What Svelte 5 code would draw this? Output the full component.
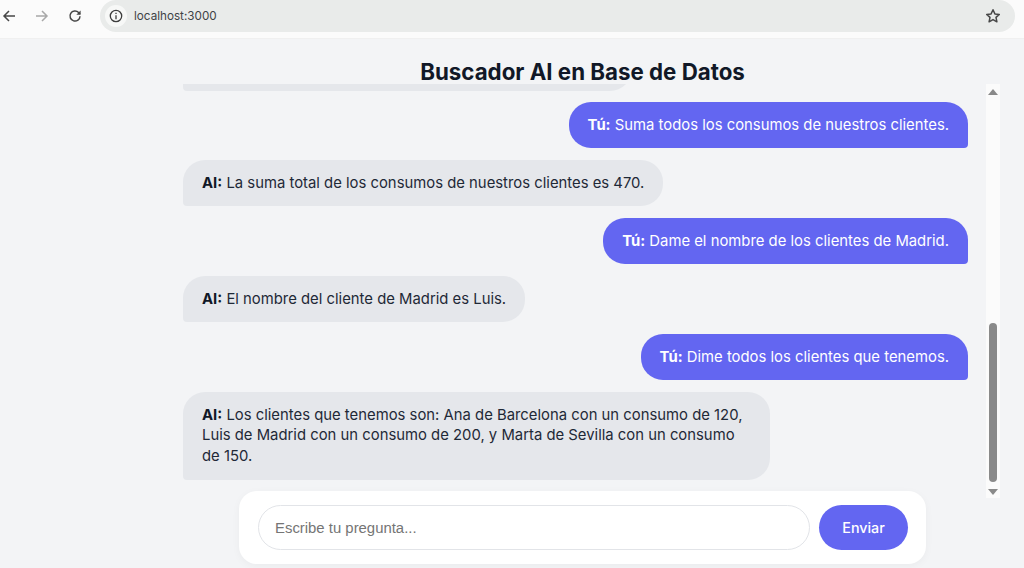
<script>
  const messages = [
    { from: 'user', text: 'Suma todos los consumos de nuestros clientes.' },
    { from: 'ai', text: 'La suma total de los consumos de nuestros clientes es 470.' },
    { from: 'user', text: 'Dame el nombre de los clientes de Madrid.' },
    { from: 'ai', text: 'El nombre del cliente de Madrid es Luis.' },
    { from: 'user', text: 'Dime todos los clientes que tenemos.' },
    {
      from: 'ai',
      text: 'Los clientes que tenemos son: Ana de Barcelona con un consumo de 120, Luis de Madrid con un consumo de 200, y Marta de Sevilla con un consumo de 150.'
    }
  ];

  let question = $state('');
</script>

<div class="toolbar">
  <button class="nav" aria-label="Atrás">
    <svg width="16" height="16" viewBox="0 0 16 16"><path d="M14 8H3M8 3L3 8l5 5" /></svg>
  </button>
  <button class="nav disabled" aria-label="Adelante">
    <svg width="16" height="16" viewBox="0 0 16 16"><path d="M2 8h11M8 3l5 5-5 5" /></svg>
  </button>
  <button class="nav" aria-label="Recargar">
    <svg width="16" height="16" viewBox="0 0 16 16">
      <path d="M13 8.2A5 5 0 1 1 11.6 4.6L13 6" />
      <path class="fill" d="M13.6 2.4v4.3H9.3z" />
    </svg>
  </button>
  <div class="omnibox">
    <span class="site-info">
      <svg width="14" height="14" viewBox="0 0 14 14">
        <circle cx="7" cy="7" r="5.7" />
        <path d="M7 6.2v4M7 3.8v1.3" />
      </svg>
    </span>
    <span class="url">localhost:3000</span>
    <svg class="star" width="16" height="16" viewBox="0 0 16 16">
      <path d="M8 1.8l1.9 4.1 4.4.5-3.3 3 .9 4.4L8 11.6l-3.9 2.2.9-4.4-3.3-3 4.4-.5z" />
    </svg>
  </div>
</div>

<main class="page">
  <h1>Buscador AI en Base de Datos</h1>

  <div class="chat-row">
    <div class="messages">
      <!-- older answer, scrolled almost out of view -->
      <div class="bubble ai older"></div>
      {#each messages as msg}
        <div class="bubble {msg.from}">
          <strong>{msg.from === 'user' ? 'Tú:' : 'AI:'}</strong>
          {msg.text}
        </div>
      {/each}
    </div>
    <div class="scrollbar">
      <span class="arrow up"></span>
      <div class="track"><div class="thumb"></div></div>
      <span class="arrow down"></span>
    </div>
  </div>

  <form class="ask" onsubmit={(e) => e.preventDefault()}>
    <input type="text" placeholder="Escribe tu pregunta..." bind:value={question} />
    <button type="submit">Enviar</button>
  </form>
</main>

<style>
  :global(body) {
    margin: 0;
    background: #f3f4f6;
    font-family: Inter, 'Liberation Sans', sans-serif;
    color: #111827;
    overflow: hidden;
  }

  .toolbar {
    display: flex;
    align-items: center;
    height: 39px;
    box-sizing: border-box;
    padding: 0 9px 6px 1px;
    background: #fbfbfb;
    border-bottom: 1px solid #f0f0f0;
  }

  .nav {
    width: 16px;
    height: 16px;
    margin: 0 17px 0 0;
    padding: 0;
    border: 0;
    background: none;
    flex: none;
  }

  .nav svg {
    display: block;
  }

  .nav path {
    fill: none;
    stroke: #474747;
    stroke-width: 1.5;
  }

  .nav path.fill {
    fill: #474747;
    stroke: none;
  }

  .nav.disabled path {
    stroke: #a8a8a8;
  }

  .omnibox {
    flex: 1;
    display: flex;
    align-items: center;
    height: 32px;
    padding: 0 14px 0 5px;
    border-radius: 16px;
    background: #e9ebea;
  }

  .site-info {
    display: flex;
    align-items: center;
    justify-content: center;
    width: 22px;
    height: 22px;
    border-radius: 50%;
    background: #f7f8f7;
  }

  .site-info svg {
    fill: none;
    stroke: #3d3d3d;
    stroke-width: 1.3;
  }

  .url {
    flex: 1;
    margin-left: 7px;
    font-size: 11.7px;
    color: #3f4346;
  }

  .star {
    fill: none;
    stroke: #474747;
    stroke-width: 1.5;
    stroke-linejoin: round;
  }

  .page {
    display: flex;
    flex-direction: column;
    align-items: center;
    height: 529px;
    padding-left: 141px;
  }

  h1 {
    margin: 19px 0 0;
    height: 26px;
    font-size: 22.3px;
    line-height: 27px;
    font-weight: 700;
    color: #111827;
  }

  .chat-row {
    align-self: stretch;
    display: flex;
    gap: 18px;
    height: 414px;
    padding-left: 42px;
  }

  .messages {
    width: 785px;
    display: flex;
    flex-direction: column;
    justify-content: flex-end;
    gap: 11.2px;
    padding-bottom: 18px;
    box-sizing: border-box;
    overflow: hidden;
  }

  .bubble {
    flex: none;
    box-sizing: border-box;
    max-width: 587px;
    padding: 13px 19px;
    font-size: 14.85px;
    line-height: 20.8px;
    border-radius: 22px;
  }

  .bubble strong {
    font-weight: 700;
  }

  .ai {
    align-self: flex-start;
    background: #e5e7eb;
    color: #1f2937;
    border-bottom-left-radius: 4px;
  }

  .ai strong {
    color: #111827;
  }

  .older {
    width: 449px;
    height: 46.8px;
  }

  .user {
    align-self: flex-end;
    background: #6366f1;
    color: #fff;
    border-bottom-right-radius: 4px;
  }

  .scrollbar {
    width: 14px;
    display: flex;
    flex-direction: column;
    align-items: center;
    background: #fbfbfb;
  }

  .arrow {
    flex: none;
    width: 0;
    height: 0;
    border-left: 5px solid transparent;
    border-right: 5px solid transparent;
  }

  .arrow.up {
    margin: 5px 0;
    border-bottom: 6.5px solid #8a8a8a;
  }

  .arrow.down {
    margin: 7px 0 3px;
    border-top: 6px solid #8a8a8a;
  }

  .track {
    flex: 1;
    width: 100%;
    display: flex;
    justify-content: center;
    align-items: flex-end;
  }

  .thumb {
    width: 8px;
    height: 159px;
    border-radius: 4px;
    background: #8a8a8a;
  }

  .ask {
    position: relative;
    display: flex;
    gap: 9px;
    width: 687px;
    box-sizing: border-box;
    margin-top: -7px;
    padding: 14px 18px 14px 19px;
    border-radius: 18px;
    background: #fff;
    box-shadow: 0 2px 8px rgba(0, 0, 0, 0.04);
  }

  .ask input {
    flex: 1;
    min-width: 0;
    height: 45px;
    box-sizing: border-box;
    padding: 0 16px;
    border: 1px solid #e2e4e8;
    border-radius: 23px;
    background: #fff;
    font-family: 'Liberation Sans', Arial, sans-serif;
    font-size: 14.9px;
    outline: none;
  }

  .ask input::placeholder {
    color: #757575;
  }

  .ask button {
    flex: none;
    width: 89px;
    height: 45px;
    border: 0;
    border-radius: 23px;
    background: #6366f1;
    color: #fff;
    font-family: Inter, sans-serif;
    font-size: 14.3px;
    font-weight: 500;
  }
</style>
